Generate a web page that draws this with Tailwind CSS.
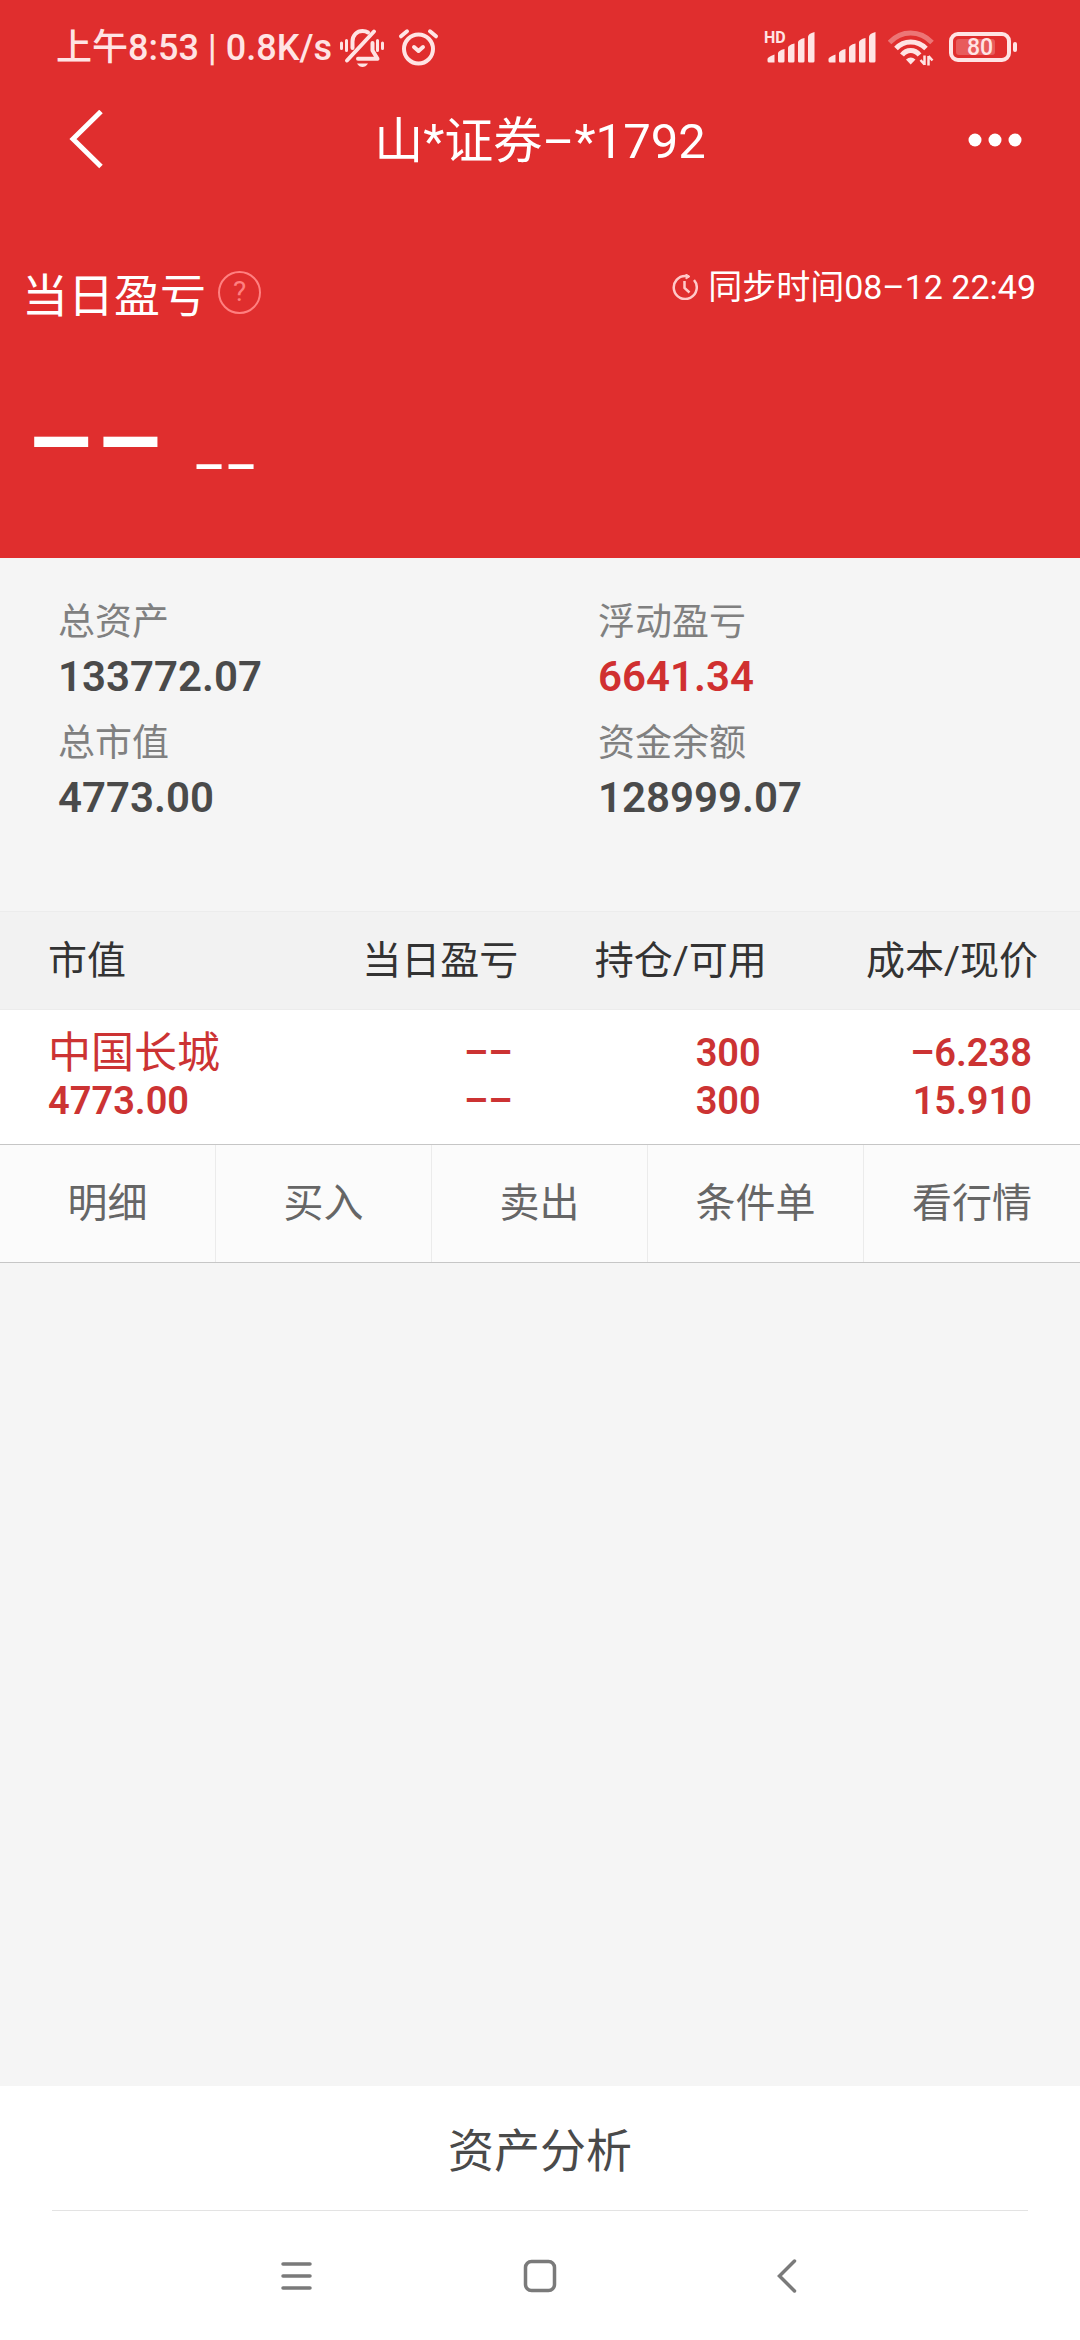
<!DOCTYPE html>
<html lang="zh-CN">
<head>
<meta charset="utf-8">
<meta name="viewport" content="width=device-width, initial-scale=1">
<title>山*证券–*1792</title>
<script src="https://cdn.jsdelivr.net/npm/@tailwindcss/browser@4"></script>
</head>
<body class="flex min-h-screen flex-col bg-[#f5f5f5] font-[Roboto,'Noto_Sans_CJK_SC',sans-serif] text-[#333333]">

<header class="bg-[#e02e2e] pb-[69px] text-white">
  <!-- status bar -->
  <div class="flex h-24 items-center justify-between pr-[62px] pl-14 text-[#ffe4e4]">
    <div class="flex items-center">
      <span class="text-4xl leading-[48px] font-medium">上午8:53 | 0.8K/s</span>
      <svg class="ml-2 h-10 w-11" viewBox="0 0 44 40" fill="none" stroke="currentColor" stroke-width="4" stroke-linecap="round">
        <path d="M12.5 20V13.5C12.5 7 17 3 22.5 3C25 3 27 3.8 28 4.5"/>
        <path d="M32.5 15V22.5L37.5 30.8H18" stroke-linejoin="round"/>
        <path d="M7 32.5L34 3.5"/>
        <path d="M17 35.5H28C26.5 38 24.5 39 22.5 39C20.5 39 18.5 38 17 35.5Z" fill="currentColor" stroke="none"/>
        <path d="M1.5 15V20.5M6.5 12.5V22.5M37.5 12.5V22.5M42.5 15V20.5" stroke-width="3"/>
      </svg>
      <svg class="ml-3.5 h-10 w-[42px]" viewBox="0 0 42 40" fill="none" stroke="currentColor" stroke-width="4" stroke-linecap="round" stroke-linejoin="round">
        <circle cx="20.5" cy="21" r="14.5"/>
        <path d="M3 8.3L9 3.3M38 8.3L32 3.3M16 19L20.5 23L25 19"/>
      </svg>
    </div>
    <div class="flex items-center gap-3">
      <svg class="h-10 w-[52px] overflow-visible" viewBox="0 0 52 40" fill="currentColor">
        <text x="0" y="15" font-size="16" font-weight="700" font-family="Roboto">HD</text>
        <path d="M3.5 31Q3.5 29 10.5 26.5V34.5H5Q3.5 34.5 3.5 33ZM14 25.5Q14 22.5 20.5 21V33Q20.5 34.5 19 34.5H15.5Q14 34.5 14 33ZM24 20Q24 17 30.5 15.5V33Q30.5 34.5 29 34.5H25.5Q24 34.5 24 33ZM34 14.5Q34 11.5 40.5 10V33Q40.5 34.5 39 34.5H35.5Q34 34.5 34 33ZM44 9Q44 5.5 50.5 4V33Q50.5 34.5 49 34.5H45.5Q44 34.5 44 33Z"/>
      </svg>
      <svg class="h-10 w-12" viewBox="3 0 48 40" fill="currentColor">
        <path d="M3.5 31Q3.5 29 10.5 26.5V34.5H5Q3.5 34.5 3.5 33ZM14 25.5Q14 22.5 20.5 21V33Q20.5 34.5 19 34.5H15.5Q14 34.5 14 33ZM24 20Q24 17 30.5 15.5V33Q30.5 34.5 29 34.5H25.5Q24 34.5 24 33ZM34 14.5Q34 11.5 40.5 10V33Q40.5 34.5 39 34.5H35.5Q34 34.5 34 33ZM44 9Q44 5.5 50.5 4V33Q50.5 34.5 49 34.5H45.5Q44 34.5 44 33Z"/>
      </svg>
      <svg class="h-10 w-12" viewBox="0 0 48 40" fill="none" stroke="currentColor" stroke-width="5">
        <path d="M1.5 14.5Q10.5 5 22.7 5T44 14.5" opacity=".4"/>
        <path d="M8 20.5Q14 14 22.7 14T38 20.5"/>
        <path d="M14 27Q17.5 22.5 22.7 22.5T31.5 27"/>
        <path d="M18 31.5Q22.7 27.5 27.5 31.5L22.7 36.5Z" fill="currentColor" stroke="none"/>
        <path d="M32.5 32L36.5 36.5M36.5 27.5V37M40.500 37.500V28M40.500 28L44.500 32.500" stroke-width="2.5"/>
      </svg>
      <svg class="h-10 w-[70px]" viewBox="0 0 70 40" fill="none">
        <rect x="3" y="6" width="58" height="26" rx="7" stroke="currentColor" stroke-width="4"/>
        <rect x="8" y="11" width="39" height="16" rx="3" fill="currentColor" opacity=".25"/>
        <rect x="65" y="14" width="4" height="10" rx="2" fill="currentColor"/>
        <text x="19" y="27" font-size="23" font-weight="500" font-family="Roboto" fill="currentColor">80</text>
      </svg>
    </div>
  </div>

  <!-- title bar -->
  <nav class="grid h-[88px] grid-cols-[1fr_auto_1fr] items-center px-14">
    <button type="button" aria-label="返回" class="justify-self-start">
      <svg class="h-[60px] w-12" viewBox="-12 0 48 60" fill="none" stroke="currentColor" stroke-width="5"><path d="M33 1.5L5 29L33 56.5"/></svg>
    </button>
    <h1 class="pt-1 text-[49px] leading-[72px]">山*证券–*1792</h1>
    <button type="button" aria-label="更多" class="justify-self-end">
      <svg class="h-4 w-14" viewBox="0 0 56 16" fill="currentColor"><circle cx="7" cy="8" r="6.5"/><circle cx="27" cy="8" r="6.5"/><circle cx="47" cy="8" r="6.5"/></svg>
    </button>
  </nav>

  <section class="pt-[79px] pr-11 pl-[22px]">
    <div class="flex items-start justify-between">
      <div class="flex items-center gap-3">
        <h2 class="text-[46px] leading-[66px]">当日盈亏</h2>
        <button type="button" aria-label="说明" class="mb-2 flex size-[43px] items-center justify-center rounded-full border-2 border-[#ff8080] text-[28px] leading-none text-[#ff8080]">?</button>
      </div>
      <p class="flex items-center gap-2.5 text-[34px] leading-[48px]">
        <svg class="size-[26px]" viewBox="0 0 26 26" fill="none" stroke="#ffc9c9" stroke-width="2.5"><path d="M22 6A11.5 11.5 0 1 1 14 2M12.5 7V14L17.5 18.5"/><path d="M14 0L18 2.5L14 5Z" fill="#ffc9c9" stroke-width="1"/></svg>
        <span>同步时间08–12 22:49</span>
      </p>
    </div>
    <p class="flex h-[160px] items-end pl-1">
      <span class="text-[108px] leading-[92px] font-medium">––</span>
      <span class="ml-7 text-[50px] leading-[44px] font-medium">––</span>
    </p>
  </section>
</header>

<main class="flex-1">
  <dl class="grid grid-cols-2 gap-y-[13px] pt-[39px] pb-[85px] [&_dd]:text-[42px] [&_dd]:leading-[56px] [&_dd]:font-semibold [&_dt]:text-[37px] [&_dt]:leading-[52px] [&_dt]:text-[#808080] [&>div]:pl-[58px]">
    <div><dt>总资产</dt><dd class="text-[#4a4a4a]">133772.07</dd></div>
    <div><dt>浮动盈亏</dt><dd class="text-[#d03030]">6641.34</dd></div>
    <div><dt>总市值</dt><dd class="text-[#4a4a4a]">4773.00</dd></div>
    <div><dt>资金余额</dt><dd class="text-[#4a4a4a]">128999.07</dd></div>
  </dl>

  <table class="w-full table-fixed border-collapse">
    <colgroup><col class="w-[24%]"><col class="w-[24%]"><col class="w-[23%]"><col class="w-[29%]"></colgroup>
    <thead>
      <tr class="h-[98px] border-y border-[#ececec] bg-[#f2f2f2] text-right text-[39px] leading-[56px]">
        <th scope="col" class="pl-12 text-left font-normal">市值</th>
        <th scope="col" class="font-normal">当日盈亏</th>
        <th scope="col" class="font-normal">持仓/可用</th>
        <th scope="col" class="pr-[42px] font-normal">成本/现价</th>
      </tr>
    </thead>
    <tbody>
      <tr class="h-[134px] bg-white text-right text-[38px] leading-[48px] font-semibold text-[#cc3333]">
        <td class="pl-12 text-left"><div class="text-[43px] font-normal">中国长城</div><div>4773.00</div></td>
        <td class="pr-1.5"><div>––</div><div>––</div></td>
        <td class="pr-1.5"><div>300</div><div>300</div></td>
        <td class="pr-12"><div>–6.238</div><div>15.910</div></td>
      </tr>
    </tbody>
  </table>

  <div class="grid grid-cols-5 divide-x divide-[#ebebeb] border-y border-[#c6c6c6] bg-[#fbfbfb] text-[40px] leading-[117px] text-[#666666]">
    <button type="button">明细</button>
    <button type="button">买入</button>
    <button type="button">卖出</button>
    <button type="button">条件单</button>
    <button type="button">看行情</button>
  </div>
</main>

<footer class="bg-white">
  <div class="mx-[52px] border-b border-[#e3e3e3]">
    <button type="button" class="block h-[124px] w-full pt-1.5 text-[46px] text-[#4a4a4a]">资产分析</button>
  </div>
  <nav class="flex h-[129px] items-center justify-center gap-[208px] text-[#7a7a7a]">
    <button type="button" aria-label="最近任务"><svg class="size-9" viewBox="0 0 36 36" fill="none" stroke="currentColor" stroke-width="3.5" stroke-linecap="round"><path d="M5 6H32M5 18H32M5 30H32"/></svg></button>
    <button type="button" aria-label="主屏幕"><svg class="size-9" viewBox="0 0 36 36" fill="none" stroke="currentColor" stroke-width="3.5"><rect x="3.5" y="3.5" width="29" height="29" rx="6"/></svg></button>
    <button type="button" aria-label="返回"><svg class="size-9" viewBox="0 0 36 36" fill="none" stroke="currentColor" stroke-width="3.5" stroke-linecap="round"><path d="M28.5 3L13.5 18L28.5 33"/></svg></button>
  </nav>
</footer>
</body>
</html>
